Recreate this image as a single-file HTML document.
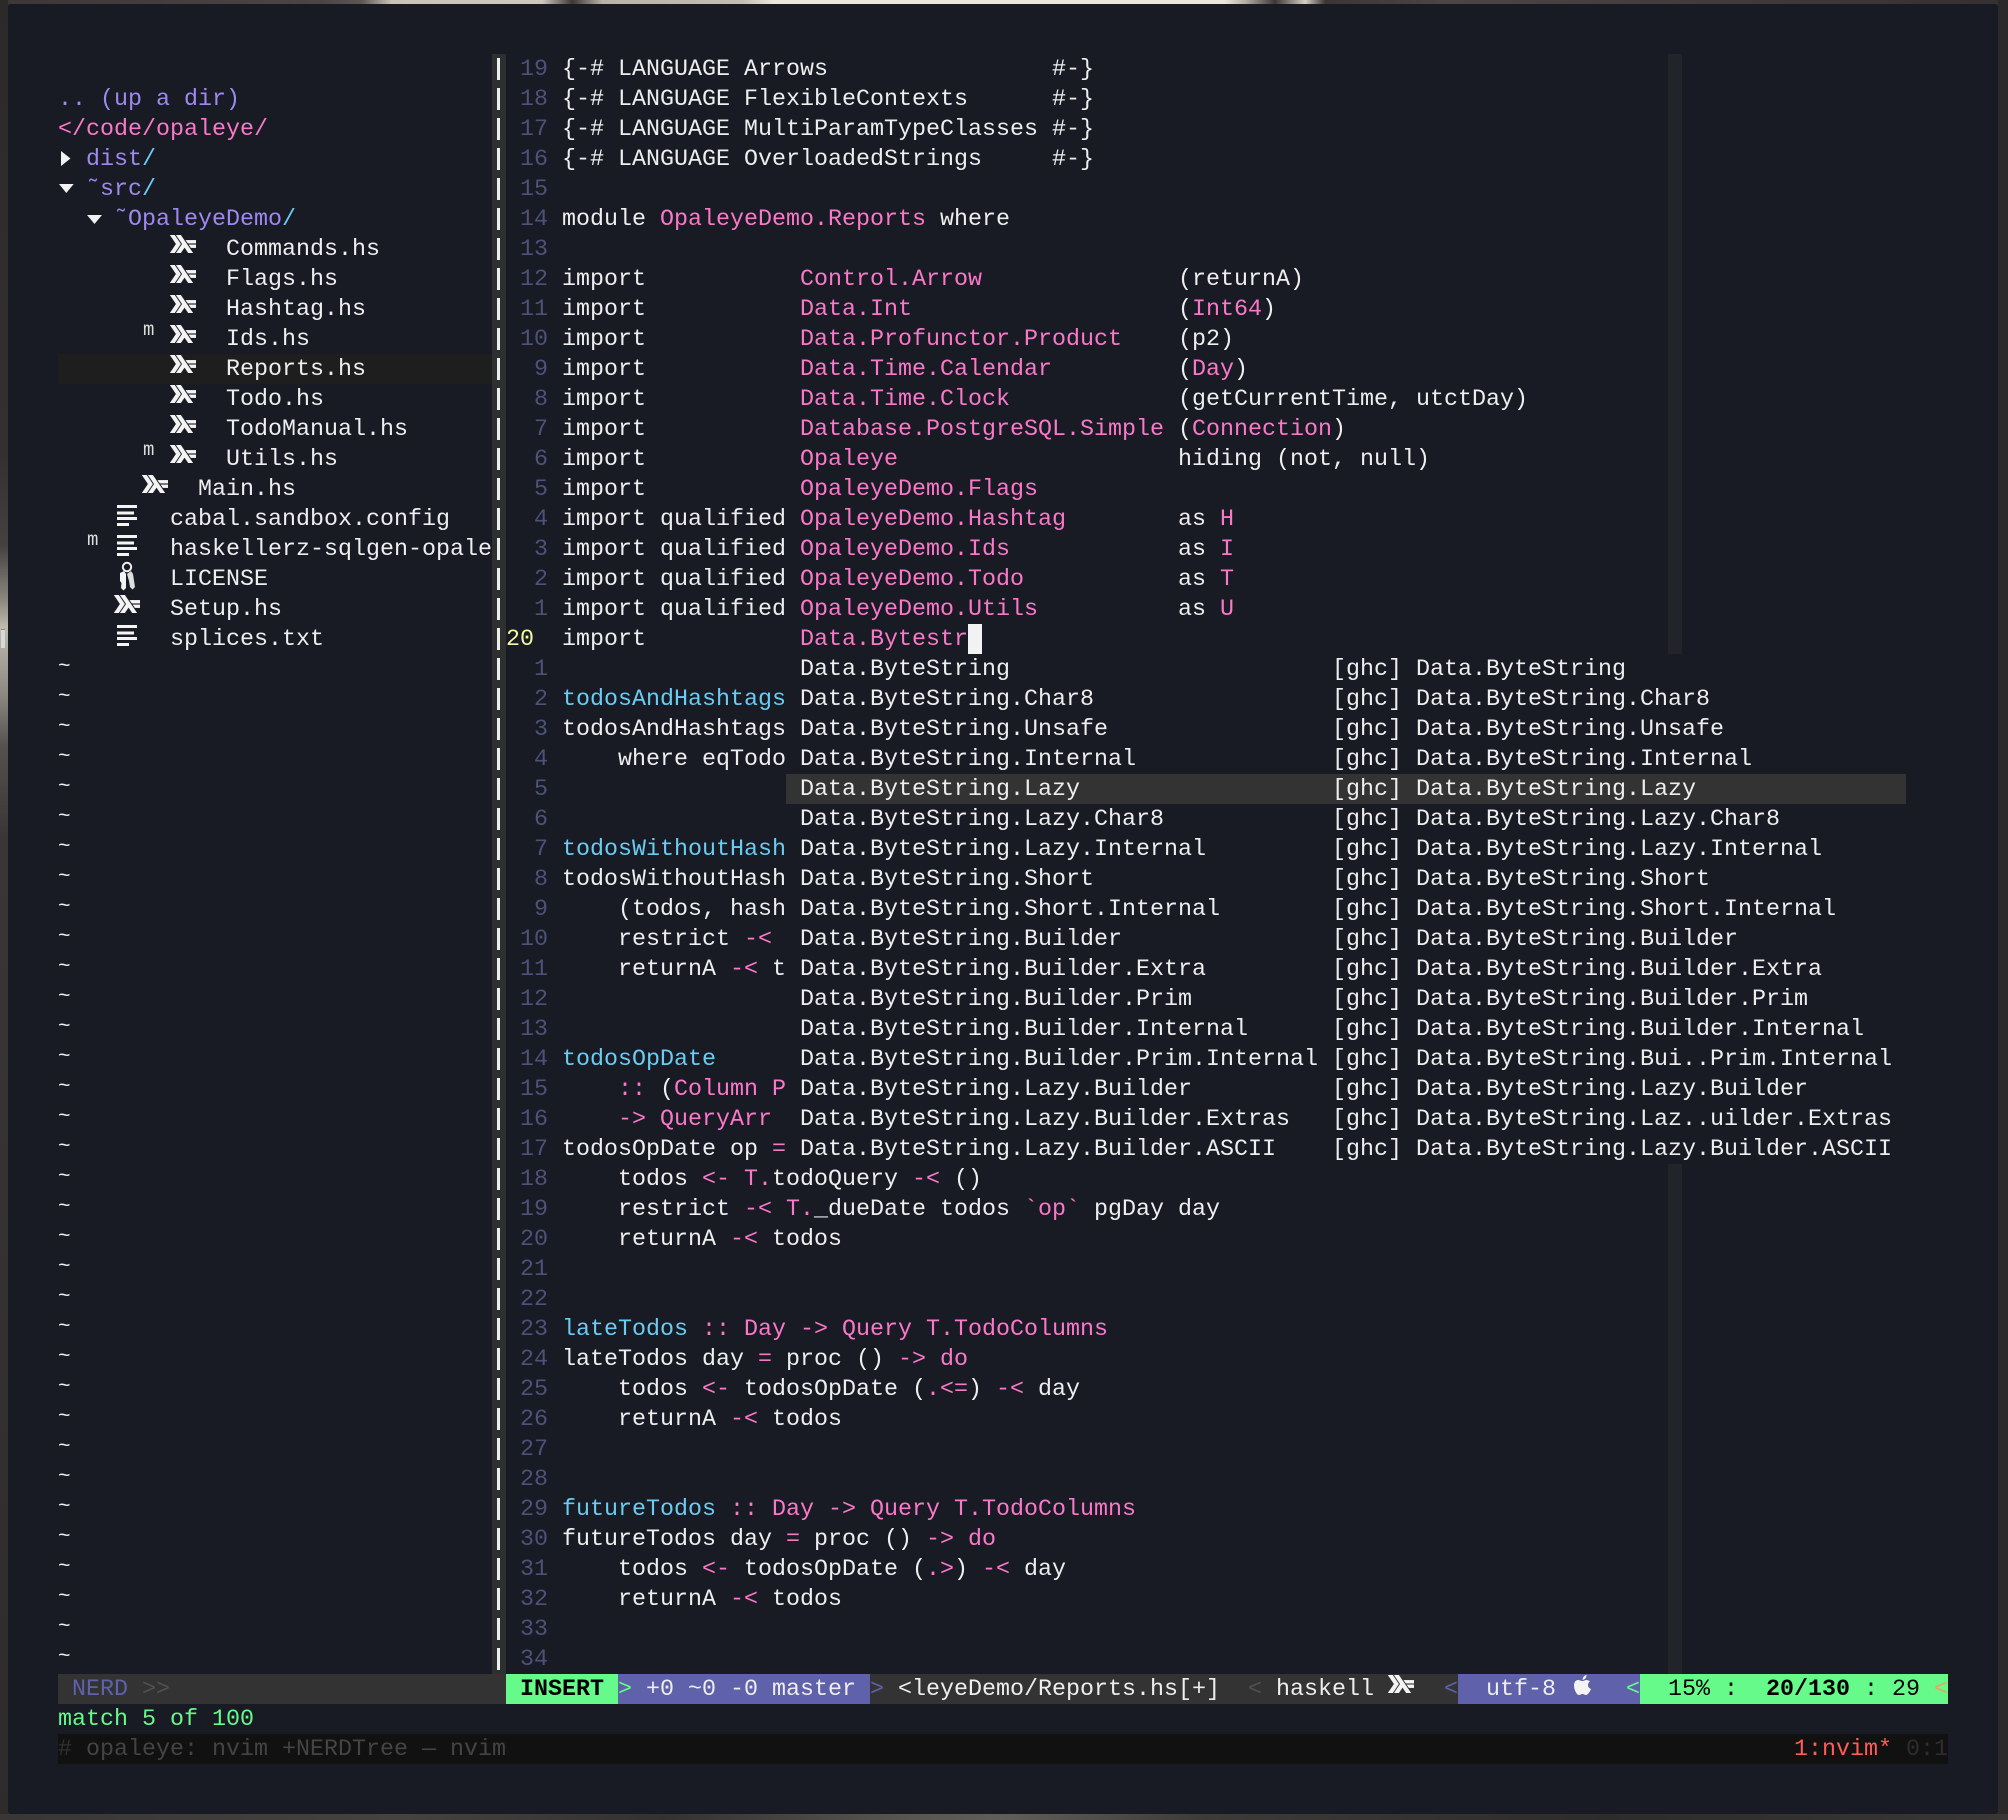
<!DOCTYPE html>
<html><head><meta charset="utf-8"><title>nvim</title>
<style>
html,body{margin:0;padding:0;width:2008px;height:1820px;overflow:hidden;background:#302c2c}
#top{position:absolute;left:0;top:0;width:2008px;height:4px;background:linear-gradient(90deg,#3b3736 0,#4a4644 16%,#5a5652 18%,#c9c2b6 19.5%,#cfc9bd 27%,#3c3836 28.5%,#b8b2a8 30%,#c4beb2 37%,#ece6da 38.5%,#ece6da 61%,#b5afa5 62%,#3c3837 63.5%,#d5cfc4 65%,#3a3634 66%,#4a4644 72%,#353131 100%)}
#left{position:absolute;left:0;top:0;width:8px;height:1820px;background:linear-gradient(180deg,#2c2929 0,#343030 25%,#454140 30%,#8c8880 33%,#c0bbb0 34.5%,#8f8b84 38%,#55514e 41%,#3a3636 46%,#2e2b2b 100%)}
#i{position:absolute;left:1px;top:630px;width:4px;height:18px;background:#d8d8d8;box-shadow:0 -1px 0 #888}
#right{position:absolute;left:1998px;top:0;width:10px;height:1820px;background:#2c292b}
#bot{position:absolute;left:0;top:1814px;width:2008px;height:6px;background:linear-gradient(90deg,#3a3636 0,#47423f 20%,#353131 33%,#5a5450 45%,#635d59 50%,#3e3a38 60%,#2e2b2b 80%,#3a3636 100%)}
#win{position:absolute;left:8px;top:4px;width:1990px;height:1810px;background:#181a24;border-radius:3px}
pre,.c{position:absolute;margin:1px 0 0;font:23.33px/30px "Liberation Mono","DejaVu Sans Mono",monospace;white-space:pre;color:#eeeeee}
.c{height:30px}
i{font-style:normal;color:#4e5178}
b{font-weight:normal;color:#fa78c8}
u{text-decoration:none;color:#6accf2}
em{font-style:normal;color:#f3f99d}
q{quotes:none;color:#9f88ee}
q::before,q::after{content:none}
.r{position:absolute}
svg{position:absolute;display:block}
.m{position:absolute;font:19px/19px "Liberation Mono",monospace;color:#dddddd}
.h{stroke:#f4f4f4;stroke-width:.25}
</style></head>
<body>
<div id="top"></div><div id="left"></div><div id="i"></div><div id="right"></div><div id="bot"></div>
<div id="win"></div>

<!-- reports highlight -->
<div class="r" style="left:58px;top:354px;width:434px;height:30px;background:#1e1e1e"></div>
<!-- vsplit -->
<div class="r" style="left:492px;top:54px;width:14px;height:1620px;background:#2e2f2f"></div>
<div class="r" style="left:497px;top:54px;width:3px;height:1620px;background:repeating-linear-gradient(180deg,transparent 0,transparent 4px,#eeeeee 4px,#eeeeee 26px,transparent 26px,transparent 30px)"></div>
<!-- colorcolumn -->
<div class="r" style="left:1668px;top:54px;width:14px;height:600px;background:#222429"></div>
<div class="r" style="left:1668px;top:1164px;width:14px;height:510px;background:#222429"></div>
<!-- popup selection -->
<div class="r" style="left:786px;top:774px;width:1120px;height:30px;background:#333333"></div>

<!-- sidebar -->
<pre style="left:58px;top:54px">

<q>.. (up a dir)</q>
<b>&lt;/code/opaleye/</b>
  <q>dist</q><u>/</u>
  <q>˜src</q><u>/</u>
    <q>˜OpaleyeDemo</q><u>/</u>
            Commands.hs
            Flags.hs
            Hashtag.hs
            Ids.hs
            Reports.hs
            Todo.hs
            TodoManual.hs
            Utils.hs
          Main.hs
        cabal.sandbox.config
        haskellerz-sqlgen-opale
        LICENSE
        Setup.hs
        splices.txt</pre>
<pre style="left:58px;top:652px;font-size:21px">~
~
~
~
~
~
~
~
~
~
~
~
~
~
~
~
~
~
~
~
~
~
~
~
~
~
~
~
~
~
~
~
~
~</pre>

<div class="m" style="left:143px;top:321px">m</div>
<div class="m" style="left:143px;top:441px">m</div>
<div class="m" style="left:87px;top:531px">m</div>

<!-- triangles -->
<svg style="left:58px;top:144px" width="46" height="90" viewBox="0 0 46 90" fill="#f2f2f2"><polygon points="3,7 12.5,14.5 3,22"/><polygon points="1,40 15.7,40 8.3,49"/><polygon points="29,71 44,71 36.5,80"/></svg>

<!-- icon defs -->
<svg width="0" height="0"><defs><g id="hs"><path d="M0 12 4 6 0 0H3L7 6 3 12Z"/><path d="M4 12 8 6 4 0H7L15 12H12L9.5 8.25 7 12Z"/><path d="M13.67 8.5 12.33 6.5H17V8.5Z"/><path d="M11.67 5.5 10.33 3.5H17V5.5Z"/></g>
<g id="tx"><rect x="0" y="1" width="20" height="3"/><rect x="0" y="7.5" width="17" height="3"/><rect x="0" y="13" width="20" height="3"/><rect x="0" y="19" width="12" height="3"/></g></defs></svg>
<svg class="h" style="left:170px;top:235px" width="26" height="18" viewBox="0 0 17 12" preserveAspectRatio="none" fill="#f4f4f4"><use href="#hs"/></svg>
<svg class="h" style="left:170px;top:265px" width="26" height="18" viewBox="0 0 17 12" preserveAspectRatio="none" fill="#f4f4f4"><use href="#hs"/></svg>
<svg class="h" style="left:170px;top:295px" width="26" height="18" viewBox="0 0 17 12" preserveAspectRatio="none" fill="#f4f4f4"><use href="#hs"/></svg>
<svg class="h" style="left:170px;top:325px" width="26" height="18" viewBox="0 0 17 12" preserveAspectRatio="none" fill="#f4f4f4"><use href="#hs"/></svg>
<svg class="h" style="left:170px;top:355px" width="26" height="18" viewBox="0 0 17 12" preserveAspectRatio="none" fill="#f4f4f4"><use href="#hs"/></svg>
<svg class="h" style="left:170px;top:385px" width="26" height="18" viewBox="0 0 17 12" preserveAspectRatio="none" fill="#f4f4f4"><use href="#hs"/></svg>
<svg class="h" style="left:170px;top:415px" width="26" height="18" viewBox="0 0 17 12" preserveAspectRatio="none" fill="#f4f4f4"><use href="#hs"/></svg>
<svg class="h" style="left:170px;top:445px" width="26" height="18" viewBox="0 0 17 12" preserveAspectRatio="none" fill="#f4f4f4"><use href="#hs"/></svg>
<svg class="h" style="left:142px;top:475px" width="26" height="18" viewBox="0 0 17 12" preserveAspectRatio="none" fill="#f4f4f4"><use href="#hs"/></svg>
<svg class="h" style="left:114px;top:595px" width="26" height="18" viewBox="0 0 17 12" preserveAspectRatio="none" fill="#f4f4f4"><use href="#hs"/></svg>

<!-- text icons -->
<svg style="left:117px;top:504px" width="20" height="24" fill="#f4f4f4"><use href="#tx"/></svg>
<svg style="left:117px;top:534px" width="20" height="24" fill="#f4f4f4"><use href="#tx"/></svg>
<svg style="left:117px;top:624px" width="20" height="24" fill="#f4f4f4"><use href="#tx"/></svg>

<!-- keys -->
<svg style="left:118px;top:561px" width="18" height="30" viewBox="0 0 18 30"><circle cx="9" cy="6" r="4.2" fill="none" stroke="#eeeeee" stroke-width="2"/><path d="M2 12 6 10 8 13 8 27 5.5 29.5 3 27 3.5 22 2 20Z" fill="#f4f4f4"/><path d="M9 13 13 10 15 13 17 26 14.5 28.5 12 26 11 20Z" fill="#dddddd"/></svg>

<!-- main code -->
<pre style="left:506px;top:54px"> <i>19</i> {-# LANGUAGE Arrows                #-}
 <i>18</i> {-# LANGUAGE FlexibleContexts      #-}
 <i>17</i> {-# LANGUAGE MultiParamTypeClasses #-}
 <i>16</i> {-# LANGUAGE OverloadedStrings     #-}
 <i>15</i>
 <i>14</i> module <b>OpaleyeDemo.Reports</b> where
 <i>13</i>
 <i>12</i> import           <b>Control.Arrow</b>              (returnA)
 <i>11</i> import           <b>Data.Int</b>                   (<b>Int64</b>)
 <i>10</i> import           <b>Data.Profunctor.Product</b>    (p2)
  <i>9</i> import           <b>Data.Time.Calendar</b>         (<b>Day</b>)
  <i>8</i> import           <b>Data.Time.Clock</b>            (getCurrentTime, utctDay)
  <i>7</i> import           <b>Database.PostgreSQL.Simple</b> (<b>Connection</b>)
  <i>6</i> import           <b>Opaleye</b>                    hiding (not, null)
  <i>5</i> import           <b>OpaleyeDemo.Flags</b>
  <i>4</i> import qualified <b>OpaleyeDemo.Hashtag</b>        as <b>H</b>
  <i>3</i> import qualified <b>OpaleyeDemo.Ids</b>            as <b>I</b>
  <i>2</i> import qualified <b>OpaleyeDemo.Todo</b>           as <b>T</b>
  <i>1</i> import qualified <b>OpaleyeDemo.Utils</b>          as <b>U</b>
<em>20</em>  import           <b>Data.Bytestr</b>
  <i>1</i>
  <i>2</i> <u>todosAndHashtags</u>
  <i>3</i> todosAndHashtags
  <i>4</i>     where eqTodo
  <i>5</i>
  <i>6</i>
  <i>7</i> <u>todosWithoutHash</u>
  <i>8</i> todosWithoutHash
  <i>9</i>     (todos, hash
 <i>10</i>     restrict <b>-&lt;</b>
 <i>11</i>     returnA <b>-&lt;</b> t
 <i>12</i>
 <i>13</i>
 <i>14</i> <u>todosOpDate</u>
 <i>15</i>     <b>::</b> (<b>Column P</b>
 <i>16</i>     <b>-&gt;</b> <b>QueryArr</b>
 <i>17</i> todosOpDate op <b>=</b>
 <i>18</i>     todos <b>&lt;-</b> <b>T.</b>todoQuery <b>-&lt;</b> ()
 <i>19</i>     restrict <b>-&lt;</b> <b>T.</b>_dueDate todos <b>`op`</b> pgDay day
 <i>20</i>     returnA <b>-&lt;</b> todos
 <i>21</i>
 <i>22</i>
 <i>23</i> <u>lateTodos</u> <b>::</b> <b>Day</b> <b>-&gt;</b> <b>Query</b> <b>T.TodoColumns</b>
 <i>24</i> lateTodos day <b>=</b> proc () <b>-&gt;</b> <b>do</b>
 <i>25</i>     todos <b>&lt;-</b> todosOpDate (<b>.&lt;=</b>) <b>-&lt;</b> day
 <i>26</i>     returnA <b>-&lt;</b> todos
 <i>27</i>
 <i>28</i>
 <i>29</i> <u>futureTodos</u> <b>::</b> <b>Day</b> <b>-&gt;</b> <b>Query</b> <b>T.TodoColumns</b>
 <i>30</i> futureTodos day <b>=</b> proc () <b>-&gt;</b> <b>do</b>
 <i>31</i>     todos <b>&lt;-</b> todosOpDate (<b>.&gt;</b>) <b>-&lt;</b> day
 <i>32</i>     returnA <b>-&lt;</b> todos
 <i>33</i>
 <i>34</i></pre>

<!-- cursor -->
<div class="r" style="left:968px;top:624px;width:14px;height:30px;background:#f2f2f2"></div>

<!-- popup col 1 -->
<pre style="left:800px;top:654px">Data.ByteString
Data.ByteString.Char8
Data.ByteString.Unsafe
Data.ByteString.Internal
Data.ByteString.Lazy
Data.ByteString.Lazy.Char8
Data.ByteString.Lazy.Internal
Data.ByteString.Short
Data.ByteString.Short.Internal
Data.ByteString.Builder
Data.ByteString.Builder.Extra
Data.ByteString.Builder.Prim
Data.ByteString.Builder.Internal
Data.ByteString.Builder.Prim.Internal
Data.ByteString.Lazy.Builder
Data.ByteString.Lazy.Builder.Extras
Data.ByteString.Lazy.Builder.ASCII</pre>
<!-- popup col 2 -->
<pre style="left:1332px;top:654px">[ghc] Data.ByteString
[ghc] Data.ByteString.Char8
[ghc] Data.ByteString.Unsafe
[ghc] Data.ByteString.Internal
[ghc] Data.ByteString.Lazy
[ghc] Data.ByteString.Lazy.Char8
[ghc] Data.ByteString.Lazy.Internal
[ghc] Data.ByteString.Short
[ghc] Data.ByteString.Short.Internal
[ghc] Data.ByteString.Builder
[ghc] Data.ByteString.Builder.Extra
[ghc] Data.ByteString.Builder.Prim
[ghc] Data.ByteString.Builder.Internal
[ghc] Data.ByteString.Bui..Prim.Internal
[ghc] Data.ByteString.Lazy.Builder
[ghc] Data.ByteString.Laz..uilder.Extras
[ghc] Data.ByteString.Lazy.Builder.ASCII</pre>

<!-- status line -->
<div class="r" style="left:58px;top:1674px;width:1890px;height:30px;background:#333333"></div>
<div class="r" style="left:506px;top:1674px;width:112px;height:30px;background:#66fa8a"></div>
<div class="r" style="left:618px;top:1674px;width:252px;height:30px;background:#5f61ab"></div>
<div class="r" style="left:1458px;top:1674px;width:182px;height:30px;background:#5f61ab"></div>
<div class="r" style="left:1640px;top:1674px;width:308px;height:30px;background:#66fa8a"></div>
<div class="c" style="left:72px;top:1674px;color:#5f61ab">NERD <span style="color:#505050">&gt;&gt;</span></div>
<div class="c" style="left:520px;top:1674px;color:#000;font-weight:bold">INSERT</div>
<div class="c" style="left:618px;top:1674px;color:#66fa8a">&gt;</div>
<div class="c" style="left:646px;top:1674px">+0 ~0 -0 master</div>
<div class="c" style="left:870px;top:1674px;color:#5f61ab">&gt;</div>
<div class="c" style="left:898px;top:1674px">&lt;leyeDemo/Reports.hs[+]</div>
<div class="c" style="left:1248px;top:1674px;color:#505050">&lt;</div>
<div class="c" style="left:1276px;top:1674px">haskell</div>
<svg class="h" style="left:1388px;top:1675px" width="26" height="18" viewBox="0 0 17 12" preserveAspectRatio="none" fill="#f4f4f4"><use href="#hs"/></svg>
<div class="c" style="left:1444px;top:1674px;color:#5f61ab">&lt;</div>
<div class="c" style="left:1486px;top:1674px">utf-8</div>
<svg style="left:1574px;top:1675px" width="17" height="20" viewBox="0 0 17 20" fill="#f4f4f4"><path d="M8.5 6C6.5 6 5.8 5 4 5 1.5 5 0 7.5 0 10.5 0 14.5 2.5 20 5 20 6.5 20 7 19 8.5 19 10 19 10.5 20 12 20 14 20 16 16.5 17 14 15 13 14 12 14 10 14 8.5 15 7 16 6.5 15 5.5 13.5 5 12.5 5 11 5 10 6 8.5 6Z"/><path d="M8.5 4.8C8.5 2.5 10.5.3 12.5 0 12.7 2.5 10.8 4.8 8.5 4.8Z"/></svg>
<div class="c" style="left:1626px;top:1674px;color:#66fa8a">&lt;</div>
<div class="c" style="left:1668px;top:1674px;color:#000">15% :</div>
<div class="c" style="left:1766px;top:1674px;color:#000;font-weight:bold">20/130</div>
<div class="c" style="left:1864px;top:1674px;color:#000">: 29</div>
<div class="c" style="left:1934px;top:1674px;color:#f0a060">&lt;</div>

<!-- command line -->
<div class="c" style="left:58px;top:1704px;color:#66fa8a">match 5 of 100</div>

<!-- tmux -->
<div class="r" style="left:58px;top:1734px;width:1890px;height:30px;background:#111111"></div>
<div class="c" style="left:58px;top:1734px;color:#444444"><span style="color:#303030">#</span> opaleye: nvim +NERDTree — nvim</div>
<div class="c" style="left:1794px;top:1734px;color:#ff5c57">1:nvim*</div>
<div class="c" style="left:1906px;top:1734px;color:#2e2e2e">0:1</div>
</body></html>
